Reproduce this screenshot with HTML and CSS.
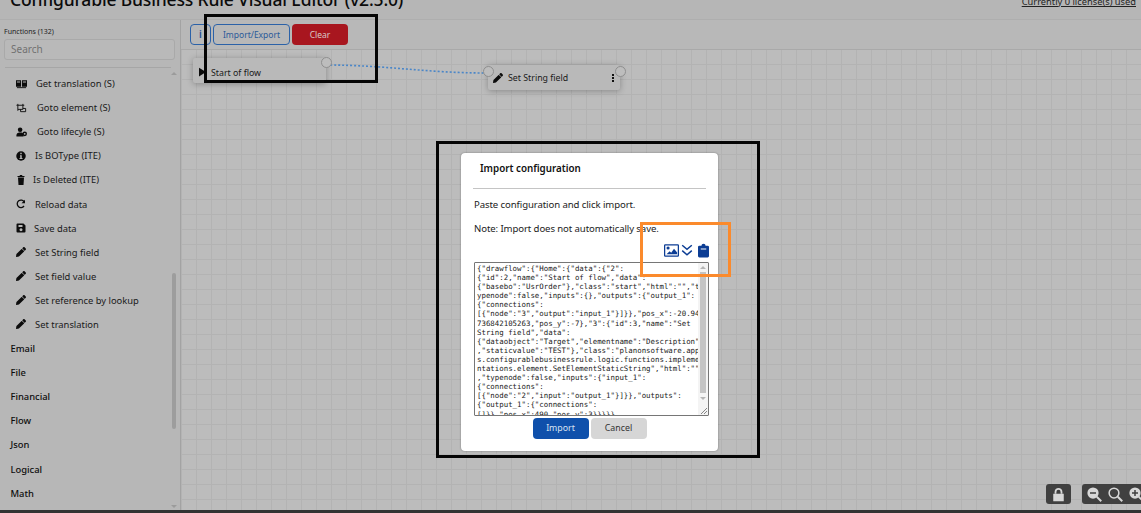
FILE: index.html
```html
<!DOCTYPE html>
<html lang="en">
<head>
<meta charset="utf-8">
<title>Configurable Business Rule Visual Editor</title>
<link rel="stylesheet" href="styles.css">
</head>
<body>
<svg class="defs" width="0" height="0" aria-hidden="true">
  <symbol id="pencil" viewBox="0 0 512 512"><path d="M498 142l-46 46c-5 5-12 5-17 0L324 77c-5-5-5-12 0-17l46-46c19-19 49-19 68 0l60 60c19 19 19 49 0 68zM284 100L22 362 0 484c-3 16 11 31 28 28l122-21 262-263c5-5 5-12 0-17L301 100c-5-5-12-5-17 0z"/></symbol>
</svg>
<div class="app">
  <header class="top">
    <h1 class="title">Configurable Business Rule Visual Editor (v2.5.0)</h1>
    <a class="licenses">Currently 0 license(s) used</a>
  </header>
  <div class="main">
    <aside class="side">
      <div class="side-head">
        <div class="fn-label">Functions (132)</div>
        <div class="search">Search</div>
        <div class="divider"></div>
      </div>
      <div class="list-wrap">
        <ul class="list">
          <li class="item"><svg class="ic" viewBox="0 0 24 20"><path fill-rule="evenodd" d="M0 2h11v14H0zM13 2h11v14H13zM2 4.500v2h7v-2zM15 4.500v2h7v-2z"/><path d="M2 17h20v2H2z"/></svg><span class="t2">Get translation (S)</span></li>
          <li class="item"><svg class="ic ic-line" viewBox="0 0 24 20"><path d="M4 4h11v9H4zM1 4h3M15 4h3M4 1v3M15 1v3M4 13v3M10 13v5h11v-7h-6"/></svg><span class="t3">Goto element (S)</span></li>
          <li class="item"><svg class="ic" viewBox="0 0 24 20"><circle cx="9" cy="5" r="5"/><path d="M1 20c-1-7 3-9 8-9s7 1 7.500 4v5z"/><circle cx="19" cy="14" r="5"/><circle cx="19" cy="14" r="2" fill="#b7b7b7"/></svg><span class="t3">Goto lifecyle (S)</span></li>
          <li class="item"><svg class="ic ic-round" viewBox="0 0 20 20"><circle cx="10" cy="10" r="9.500"/><path d="M8.500 3.500h3v3h-3zM8 8.500h3.500V14H13v2H7v-2h1.500v-3.500H8z" fill="#b7b7b7"/></svg><span class="t1">Is BOType (ITE)</span></li>
          <li class="item"><svg class="ic ic-narrow" viewBox="0 0 16 20"><path d="M1 2h4l1-2h4l1 2h4v2H1zM2 5h12l-1 15H3z"/></svg><span class="t0">Is Deleted (ITE)</span></li>
          <li class="item"><svg class="ic ic-round ic-line ic-heavy" viewBox="0 0 20 20"><path d="M16 14a7.500 7.500 0 1 1 .5-8"/><path class="solid" d="M18 1.500v7h-7z"/></svg><span class="t2">Reload data</span></li>
          <li class="item"><svg class="ic ic-round" viewBox="0 0 20 20"><path fill-rule="evenodd" d="M3 1h12l4 4v12a2 2 0 0 1-2 2H3a2 2 0 0 1-2-2V3a2 2 0 0 1 2-2zM5 4v4h8V4zM10 10.500a3 3 0 1 0 .01 0z"/></svg><span class="t0">Save data</span></li>
          <li class="item"><svg class="ic ic-round"><use href="#pencil"/></svg><span class="t1">Set String field</span></li>
          <li class="item"><svg class="ic ic-round"><use href="#pencil"/></svg><span class="t1">Set field value</span></li>
          <li class="item"><svg class="ic ic-round"><use href="#pencil"/></svg><span class="t1">Set reference by lookup</span></li>
          <li class="item"><svg class="ic ic-round"><use href="#pencil"/></svg><span class="t1">Set translation</span></li>
          <li class="cat">Email</li>
          <li class="cat">File</li>
          <li class="cat">Financial</li>
          <li class="cat">Flow</li>
          <li class="cat">Json</li>
          <li class="cat">Logical</li>
          <li class="cat">Math</li>
        </ul>
        <div class="scroll">
          <span class="arrow-up"></span>
          <span class="thumb"></span>
          <span class="arrow-down"></span>
        </div>
      </div>
    </aside>
    <section class="work">
      <div class="toolbar">
        <button class="btn btn-info">i</button>
        <button class="btn btn-outline">Import/Export</button>
        <button class="btn btn-red">Clear</button>
      </div>
      <div class="canvas">
        <svg class="wire" viewBox="0 0 300 30" width="300" height="30"><path d="M0 4 C60 4 100 12 160 12" fill="none" stroke="#4a86c8" stroke-width="1.600" stroke-dasharray="2 2"/></svg>
        <div class="node node-start">
          <svg class="play" viewBox="0 0 8 10"><path d="M0 0l8 5-8 5z"/></svg>
          <span>Start of flow</span>
          <i class="port port-out"></i>
        </div>
        <div class="node node-set">
          <svg class="node-ic"><use href="#pencil"/></svg>
          <span>Set String field</span>
          <span class="kebab"><i></i><i></i><i></i></span>
          <i class="port port-in"></i>
          <i class="port port-out"></i>
        </div>
        <div class="ctrls">
          <div class="ctrl ctrl-lock"><svg viewBox="0 0 20 20"><path fill="#d8d8d8" d="M3 9h14v10H3z"/><path d="M6 9V6.500a4 4 0 0 1 8 0V9" fill="none" stroke="#d8d8d8" stroke-width="2.400"/></svg></div>
          <div class="ctrl ctrl-zoom">
            <svg viewBox="0 0 20 20"><circle cx="8" cy="8" r="7.500" fill="#d8d8d8"/><path d="M4 7h8v2H4z" fill="#404040"/><path d="M13 13l6 6" stroke="#d8d8d8" stroke-width="2.500"/></svg>
            <svg viewBox="0 0 20 20"><circle cx="8" cy="8" r="6.500" fill="none" stroke="#d8d8d8" stroke-width="2"/><path d="M13 13l6 6" stroke="#d8d8d8" stroke-width="2.500"/></svg>
            <svg viewBox="0 0 20 20"><circle cx="8" cy="8" r="7.500" fill="#d8d8d8"/><path d="M4 7h3V4h2v3h3v2H9v3H7V9H4z" fill="#404040"/><path d="M13 13l6 6" stroke="#d8d8d8" stroke-width="2.500"/></svg>
          </div>
        </div>
      </div>
    </section>
  </div>
  <div class="base"></div>
</div>

<div class="overlay">
  <div class="modal">
    <h2 class="modal-title">Import configuration</h2>
    <hr class="modal-rule">
    <p class="modal-text">Paste configuration and click import.</p>
    <p class="modal-text">Note: Import does not automatically save.</p>
    <div class="modal-icons">
      <svg class="mi-image" viewBox="0 0 24 20"><path fill-rule="evenodd" d="M2 0h20a2 2 0 0 1 2 2v16a2 2 0 0 1-2 2H2a2 2 0 0 1-2-2V2a2 2 0 0 1 2-2zM2 2v16h20V2z"/><circle cx="6.500" cy="6" r="2.500"/><path d="M4 16l5-5 2.500 2.500L16 7l5 6v3z"/></svg>
      <svg class="mi-chev" viewBox="0 0 20 20"><path d="M2 2l8 7 8-7M2 11l8 7 8-7"/></svg>
      <svg class="mi-clip" viewBox="0 0 16 20"><path fill-rule="evenodd" d="M2 3h3a3 3 0 0 1 6 0h3a2 2 0 0 1 2 2v13a2 2 0 0 1-2 2H2a2 2 0 0 1-2-2V5a2 2 0 0 1 2-2zM4 7v1.500h8V7z"/></svg>
    </div>
    <div class="code">
      <div class="code-text">{"drawflow":{"Home":{"data":{"2":
{"id":2,"name":"Start of flow","data":
{"basebo":"UsrOrder"},"class":"start","html":"","t
ypenode":false,"inputs":{},"outputs":{"output_1":
{"connections":
[{"node":"3","output":"input_1"}]}},"pos_x":-20.94
736842105263,"pos_y":-7},"3":{"id":3,"name":"Set
String field","data":
{"dataobject":"Target","elementname":"Description"
,"staticvalue":"TEST"},"class":"planonsoftware.app
s.configurablebusinessrule.logic.functions.impleme
ntations.element.SetElementStaticString","html":""
,"typenode":false,"inputs":{"input_1":
{"connections":
[{"node":"2","input":"output_1"}]}},"outputs":
{"output_1":{"connections":
[]}},"pos_x":490,"pos_y":3}}}}}</div>
      <div class="code-scroll"><span class="code-up"></span><span class="code-thumb"></span><span class="code-down"></span><span class="code-grip"></span></div>
    </div>
    <div class="modal-actions">
      <button class="mbtn mbtn-primary">Import</button>
      <button class="mbtn mbtn-cancel">Cancel</button>
    </div>
  </div>
</div>

<div class="mark mark-toolbar"></div>
<div class="mark mark-modal"></div>
<div class="mark mark-icons"></div>
</body>
</html>
```
FILE: styles.css
```css
* { box-sizing: border-box; }
html, body { margin: 0; height: 100%; overflow: hidden; }
body { font-family: "Noto Sans", sans-serif; color: #111; background: #b8b8b8; position: relative; }
.defs { position: absolute; }

.app { height: 513px; display: flex; flex-direction: column; }
.top { height: 20px; flex: none; display: flex; justify-content: space-between; align-items: flex-end; padding: 0 5px 0 10px; background: #b6b6b6; border-bottom: 1px solid #aeaeae; overflow: hidden; }
.title { margin: 0 0 10px; font-size: 17.500px; letter-spacing: -.16px; line-height: 20px; font-weight: 500; color: #0b0b0b; white-space: nowrap; }
.licenses { margin-bottom: 12px; font-size: 9.300px; line-height: 11px; text-decoration: underline; color: #222; }

.main { flex: 1; min-height: 0; display: flex; }
.side { width: 181px; flex: none; display: flex; flex-direction: column; background: #b7b7b7; border-right: 1px solid #a3a3a3; }
.side-head { padding: 7px 6px 0 4px; flex: none; }
.fn-label { font-size: 7px; line-height: 10px; color: #222; }
.search { margin-top: 2px; height: 21px; width: 171px; border: 1px solid #a9a9a9; border-radius: 3px; padding: 0 6px; font-size: 10px; line-height: 19px; color: #717171; background: #b9b9b9; }
.divider { margin: 7px 0 0 1px; height: 1px; width: 166px; background: #a6a6a6; }

.list-wrap { flex: 1; min-height: 0; display: flex; }
.list { list-style: none; margin: 0; padding: 3.500px 0 0; flex: 1; min-width: 0; overflow: hidden; }
.item, .cat { height: 24.100px; display: flex; align-items: center; font-size: 9.400px; white-space: nowrap; color: #1a1a1a; }
.item { padding-left: 16px; }
.cat { padding-left: 10.500px; font-weight: 500; color: #0d0d0d; }
.ic { width: 11px; height: 10px; flex: none; fill: currentColor; color: #0c0c0c; }
.ic-line { fill: none; stroke: currentColor; stroke-width: 2; }
.ic-heavy { stroke-width: 2.600; }
.solid { fill: currentColor; stroke: none; }
.ic-round { width: 10px; height: 10px; }
.ic-narrow { width: 8px; height: 10px; margin-left: 1px; }
.t0 { margin-left: 8px; }
.t1 { margin-left: 9px; }
.t2 { margin-left: 9px; }
.t3 { margin-left: 10px; }

.scroll { width: 10px; flex: none; margin-right: 1px; display: flex; flex-direction: column; align-items: center; padding: 4px 0 2px; }
.arrow-up { width: 0; height: 0; border: 3px solid transparent; border-top: 0; border-bottom: 3px solid #9b9b9b; flex: none; }
.arrow-down { width: 0; height: 0; border: 3px solid transparent; border-bottom: 0; border-top: 3px solid #9b9b9b; flex: none; margin-top: auto; }
.thumb { width: 4px; height: 156px; margin-top: 198px; background: #9d9d9d; border-radius: 2px; flex: none; }

.work { flex: 1; min-width: 0; display: flex; flex-direction: column; }
.toolbar { height: 30px; flex: none; display: flex; align-items: flex-start; gap: 2px; padding: 4px 0 0 9px; background: #b8b8b8; border-bottom: 1px solid #a9a9a9; }
.btn { height: 21px; padding: 0; border-radius: 4px; font: 8.500px/19px "Noto Sans", sans-serif; flex: none; }
.btn-info { width: 21px; background: transparent; border: 1px solid #2c62a8; color: #1f4f92; font-size: 10px; font-weight: 600; }
.btn-outline { width: 77px; background: transparent; border: 1px solid #2c62a8; color: #2c5a98; }
.btn-red { width: 56px; background: #a8161f; border: 0; color: #d8c8c8; }

.canvas { flex: 1; min-height: 0; position: relative; overflow: hidden; background-color: #bcbcbc; background-image: linear-gradient(#b3b3b3 1px, transparent 1px), linear-gradient(90deg, #b3b3b3 1px, transparent 1px); background-size: 15px 15px; background-position: 0 -1px; }
.wire { position: absolute; left: 145px; top: 11px; }
.node { position: absolute; display: flex; align-items: center; font-size: 8.800px; color: #1a1a1a; background: #b9b9b9; border-radius: 2px; box-shadow: 0 1px 6px rgba(0,0,0,.28); }
.node-start { left: 12px; top: 8px; width: 133px; height: 25px; padding: 4px 0 0 18px; }
.node-set { left: 307px; top: 15px; width: 132px; height: 25px; padding: 0 0 0 5px; }
.play { position: absolute; left: 6px; top: 9px; width: 7px; height: 10px; fill: #0c0c0c; }
.node-ic { width: 10px; height: 10px; fill: #0c0c0c; margin-right: 5px; flex: none; }
.kebab { margin-left: auto; margin-right: 6px; display: flex; flex-direction: column; gap: 1px; }
.kebab i { width: 2px; height: 2px; background: #111; }
.port { position: absolute; width: 11px; height: 11px; border-radius: 50%; background: #bdbdbd; border: 1px solid #8f8f8f; top: -1px; }
.port-in { left: -5px; top: 1px; }
.port-out { right: -6px; }
.node-set .port-out { top: 1px; }
.ctrls { position: absolute; right: -8px; bottom: 6px; display: flex; gap: 11px; }
.ctrl { height: 20px; background: #404040; border-radius: 3px; display: flex; align-items: center; gap: 6px; padding: 0 5px; }
.ctrl svg { width: 15px; height: 15px; flex: none; }
.base { height: 3px; flex: none; background: #333; }

.overlay { position: absolute; inset: 0; display: flex; justify-content: center; align-items: flex-start; padding: 153px 0 0 38px; pointer-events: none; }
.modal { width: 257px; height: 298px; background: #fff; border-radius: 4px; padding: 0 12px; display: flex; flex-direction: column; box-shadow: 0 0 2px rgba(0,0,0,.4); }
.modal-title { margin: 0; padding: 10px 0 0 7px; font-size: 9.800px; line-height: 12px; font-weight: 600; color: #111; }
.modal-rule { margin: 13px 0 0; border: 0; height: 1px; background: #c4c4c4; }
.modal-text { margin: 10px 0 0 1px; font-size: 9.600px; letter-spacing: -.1px; line-height: 12px; color: #222; }
.modal-text + .modal-text { margin-top: 12px; }
.modal-icons { margin: 7px -3px 0 0; height: 16px; display: flex; justify-content: flex-end; align-items: center; gap: 2px; color: #0c3d94; flex: none; }
.modal-icons svg { fill: currentColor; flex: none; }
.mi-image { width: 15px; height: 13px; }
.mi-chev { width: 12px; height: 12px; fill: none !important; stroke: currentColor; stroke-width: 2.400; }
.mi-clip { width: 11px; height: 15px; margin-left: 3px; }
.code { margin: 4px 0 0 1px; width: 235px; height: 154px; border: 1px solid #767676; border-radius: 1px; display: flex; overflow: hidden; flex: none; }
.code-text { flex: 1; padding: 1px 0 0 2px; font: 7.400px/9.100px "DejaVu Sans Mono", monospace; color: #222; white-space: pre; overflow: hidden; }
.code-scroll { width: 10px; flex: none; background: #f4f4f4; display: flex; flex-direction: column; align-items: center; padding: 3px 0 0; position: relative; }
.code-up { width: 0; height: 0; border: 3px solid transparent; border-top: 0; border-bottom: 3px solid #b5b5b5; flex: none; }
.code-down { width: 0; height: 0; border: 3px solid transparent; border-bottom: 0; border-top: 3px solid #b5b5b5; flex: none; margin-top: 4px; }
.code-thumb { width: 6px; height: 121px; margin-top: 3px; background: #c4c4c4; flex: none; }
.code-grip { position: absolute; right: 1px; bottom: 1px; width: 7px; height: 7px; background: linear-gradient(135deg, transparent 50%, #888 50%, #888 60%, transparent 60%, transparent 72%, #888 72%, #888 82%, transparent 82%); }
.modal-actions { margin-top: 2px; display: flex; justify-content: center; gap: 2px; flex: none; }
.mbtn { width: 56px; height: 21px; border: 0; border-radius: 4px; font: 8.800px/21px "Noto Sans", sans-serif; padding: 0; }
.mbtn-primary { background: #0f50ab; color: #d8e2f2; }
.mbtn-cancel { background: #d6d6d6; color: #333; }

.mark { position: absolute; pointer-events: none; }
.mark-toolbar { left: 204px; top: 14px; width: 174px; height: 69px; border: 3px solid #050505; }
.mark-modal { left: 436px; top: 141px; width: 324px; height: 317px; border: 3px solid #050505; }
.mark-icons { left: 640px; top: 222px; width: 91px; height: 55px; border: 3px solid #fb8a2c; }
```
